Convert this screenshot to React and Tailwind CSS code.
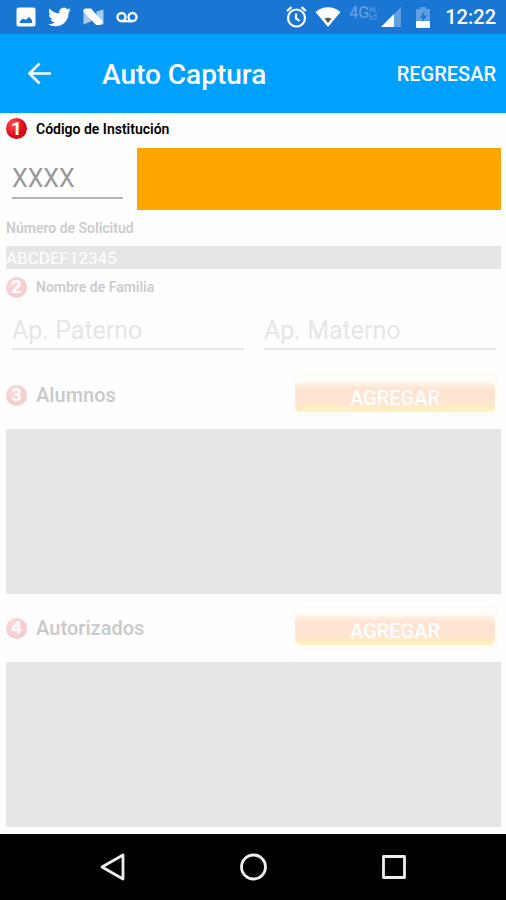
import { useState } from "react";

function StatusBar() {
  return (
    <div className="flex h-[34px] shrink-0 items-center justify-between bg-[#1976d2] pl-4 pr-[10px] text-white">
      <div className="flex items-center gap-3">
        <svg className="h-5 w-5" viewBox="0 0 20 20" aria-hidden="true">
          <path fill="currentColor" fillRule="evenodd" d="M2.500 0.500h15a2 2 0 0 1 2 2v15a2 2 0 0 1-2 2h-15a2 2 0 0 1-2-2v-15a2 2 0 0 1 2-2zM3.500 16h13l-1-3.500-2.500-2.500-3.300 3-2.200-1.500-3 2z" />
        </svg>
        <svg className="h-6 w-[23px]" viewBox="0 0 24 24" aria-hidden="true">
          <path fill="currentColor" d="M23.950 4.570a10 10 0 0 1-2.820.77 4.960 4.960 0 0 0 2.160-2.720c-.950.550-2 .960-3.130 1.190a4.920 4.920 0 0 0-8.380 4.480C7.690 8.100 4.070 6.130 1.640 3.160a4.820 4.820 0 0 0-.67 2.480c0 1.710.87 3.210 2.190 4.100a4.900 4.900 0 0 1-2.230-.62v.06a4.920 4.920 0 0 0 3.950 4.830 5 5 0 0 1-2.210.080 4.940 4.940 0 0 0 4.600 3.420A9.870 9.870 0 0 1 0 19.540a13.990 13.990 0 0 0 7.550 2.210c9.050 0 14-7.500 14-13.980 0-.210 0-.420-.020-.630a9.940 9.940 0 0 0 2.460-2.550z" />
        </svg>
        <svg className="h-[18px] w-[21px]" viewBox="0 0 21 18" aria-hidden="true">
          <path fill="#a9c9ee" d="M0.500 1.500H8v12l-7.500 3zM20.500 1.500v15h-7v-13z" />
          <path fill="currentColor" d="M0.500 1.500l2-1h5.500L20 14l-2.500 3H13L0.500 4z" />
        </svg>
        <svg className="h-3 w-[22px]" viewBox="0 0 22 12" fill="none" stroke="currentColor" strokeWidth="2.300" aria-hidden="true">
          <circle cx="5.500" cy="6" r="4" />
          <circle cx="16.500" cy="6" r="4" />
          <path d="M5.500 10.200h11" />
        </svg>
      </div>
      <div className="flex items-center">
        <svg className="mr-2 h-[22px] w-[22px]" viewBox="0 0 22 22" fill="none" stroke="currentColor" strokeWidth="2.200" aria-hidden="true">
          <circle cx="11.500" cy="12" r="8.500" />
          <path d="M11 7.500v5l3.500 2.300M2 5l4.500-3.800M21 5l-4.500-3.800" />
        </svg>
        <svg className="mr-2 h-5 w-[26px]" viewBox="0 0 26 20" aria-hidden="true">
          <path fill="currentColor" d="M0.500 5C7.500-1.300 18.500-1.300 25.500 5L13 20z" />
          <path fill="#555" d="M9.500 11.500q3.500-1.500 7 0L13 16z" />
        </svg>
        <span className="mr-1 flex h-6 items-start text-[#5e9fe0]">
          <span className="text-[16px] font-medium leading-4">4G</span>
          <svg className="h-4 w-[8px]" viewBox="0 0 9 16" fill="none" stroke="currentColor" aria-hidden="true">
            <path d="M1.500 1v6M1.500 4h3M4.500 1v6M6.500 1v6h2M1 9v6h7V9M1 12.500l7-2" />
          </svg>
        </span>
        <svg className="mr-[15px] h-5 w-5" viewBox="0 0 20 20" aria-hidden="true">
          <path fill="#5e9fe0" d="M20 0v20H0z" />
          <path fill="currentColor" d="M13 7v13H0z" />
        </svg>
        <svg className="mr-[15px] h-[21px] w-[14px]" viewBox="0 0 14 21" aria-hidden="true">
          <path fill="#5e9fe0" d="M4 0h6v2h4v13H0V2h4z" />
          <path fill="currentColor" d="M0 14h14v6q0 1-1 1H1q-1 0-1-1z" />
          <path fill="#1976d2" d="M8.500 4L4 11h2.500v4L11 8.500H8z" />
        </svg>
        <span className="text-[20px] font-medium leading-6">12:22</span>
      </div>
    </div>
  );
}

function StepLabel({ number, text, htmlFor, big, muted }) {
  return (
    <div className={"flex items-center gap-[9px] " + (muted ? "opacity-20" : "")}>
      <span className="flex h-[21px] w-[21px] items-center justify-center rounded-full bg-radial-[at_35%_30%] from-[#ff5050] via-[#e01020] to-[#c80012] text-[19px] font-bold leading-5 text-white">
        {number}
      </span>
      <label htmlFor={htmlFor} className={big ? "text-[20px] font-semibold leading-6 text-black" : "text-[14px] font-semibold leading-5 text-black"}>
        {text}
      </label>
    </div>
  );
}

function AddButton({ id }) {
  return (
    <button
      id={id}
      type="button"
      className="mr-1 h-[42px] w-[204px] rounded-lg border border-[#fff8ef] bg-[#fffefb] px-px pt-1.5 pb-[3px]"
    >
      <span className="flex h-full items-center justify-center rounded-md bg-linear-to-b from-[#fffaf2] from-0% via-[#ffe4d3] via-25% to-[#ffe4d3] to-70% text-[20px] font-medium text-white">
        <span className="flex h-full w-full items-center justify-center rounded-md bg-linear-to-b from-transparent from-65% to-[#fff0c0] to-95% pt-0.5">
          AGREGAR
        </span>
      </span>
    </button>
  );
}

function ListSection({ number, title, id }) {
  return (
    <section className="flex flex-1 flex-col">
      <div className="flex h-[68px] items-center justify-between">
        <StepLabel number={number} text={title} htmlFor={id} big muted />
        <AddButton id={id} />
      </div>
      <div className="min-h-20 flex-1 bg-[#e6e6e6]" />
    </section>
  );
}

function NavBar() {
  return (
    <nav className="flex h-[66px] shrink-0 items-center justify-center gap-[113px] bg-black text-[#eee]">
      <button type="button" aria-label="Atrás">
        <svg className="h-7 w-7" viewBox="0 0 28 28" fill="none" stroke="currentColor" strokeWidth="2.800" strokeLinejoin="round">
          <path d="M4 14L25 2v24z" />
        </svg>
      </button>
      <button type="button" aria-label="Inicio">
        <svg className="h-7 w-7" viewBox="0 0 28 28" fill="none" stroke="currentColor" strokeWidth="2.800">
          <circle cx="14.500" cy="14" r="12" />
        </svg>
      </button>
      <button type="button" aria-label="Recientes">
        <svg className="h-7 w-7" viewBox="0 0 28 28" fill="none" stroke="currentColor" strokeWidth="2.800" strokeLinejoin="round">
          <rect x="3.500" y="3.500" width="21" height="21" />
        </svg>
      </button>
    </nav>
  );
}

function App() {
  const [code, setCode] = useState("");
  const [paterno, setPaterno] = useState("");
  const [materno, setMaterno] = useState("");

  return (
    <div className="flex min-h-screen flex-col bg-[#fefefe] font-[Roboto,sans-serif]">
      <StatusBar />
      <header className="flex h-[79px] shrink-0 items-center bg-[#00a0ff] pl-[27px] pr-[10px] text-white">
        <button type="button" aria-label="Volver">
          <svg className="h-6 w-6" viewBox="0 0 24 24" fill="none" stroke="currentColor" strokeWidth="2.700">
            <path d="M24 11.500H2.500M12.500 1.500l-10 10 10 10" />
          </svg>
        </button>
        <h1 className="ml-[51px] flex-1 pt-0.5 text-[28px] font-medium leading-8">Auto Captura</h1>
        <button type="button" className="text-[20px] font-medium leading-6">REGRESAR</button>
      </header>

      <main className="flex flex-1 flex-col pl-1.5 pr-[5px] pb-[7px]">
        <div className="flex h-[35px] items-center pb-1">
          <StepLabel number="1" text="Código de Institución" htmlFor="code" />
        </div>
        <div className="flex h-[62px] gap-[14px] pl-1.5">
          <input
            id="code"
            value={code}
            onChange={(e) => setCode(e.target.value)}
            placeholder="XXXX"
            className="h-[51px] w-[111px] border-b-2 border-[#b5b5b5] pt-3 text-[25px] text-[#333] outline-none placeholder:text-[#999999]"
          />
          <div className="flex-1 bg-[#ffa500]" />
        </div>

        <label htmlFor="request" className="flex h-9 items-center text-[14px] font-semibold text-[#cccccc]">
          Número de Solicitud
        </label>
        <input
          id="request"
          readOnly
          value="ABCDEF12345"
          className="h-[23px] w-full bg-[#e6e6e6] pt-0.5 text-[17px] text-white outline-none"
        />

        <div className="flex h-9 items-center">
          <StepLabel number="2" text="Nombre de Familia" htmlFor="paterno" muted />
        </div>
        <div className="mb-[11px] flex gap-5 pl-1.5 pr-[5px]">
          <input
            id="paterno"
            value={paterno}
            onChange={(e) => setPaterno(e.target.value)}
            placeholder="Ap. Paterno"
            className="h-[45px] w-0 flex-1 border-b-2 border-[#e6e6e6] pt-2 text-[25px] text-[#333] outline-none placeholder:text-[#e6e6e6]"
          />
          <input
            aria-label="Ap. Materno"
            value={materno}
            onChange={(e) => setMaterno(e.target.value)}
            placeholder="Ap. Materno"
            className="h-[45px] w-0 flex-1 border-b-2 border-[#e6e6e6] pt-2 text-[25px] text-[#333] outline-none placeholder:text-[#e6e6e6]"
          />
        </div>

        <ListSection number="3" title="Alumnos" id="add-student" />
        <ListSection number="4" title="Autorizados" id="add-authorized" />
      </main>
      <NavBar />
    </div>
  );
}

export default App;
